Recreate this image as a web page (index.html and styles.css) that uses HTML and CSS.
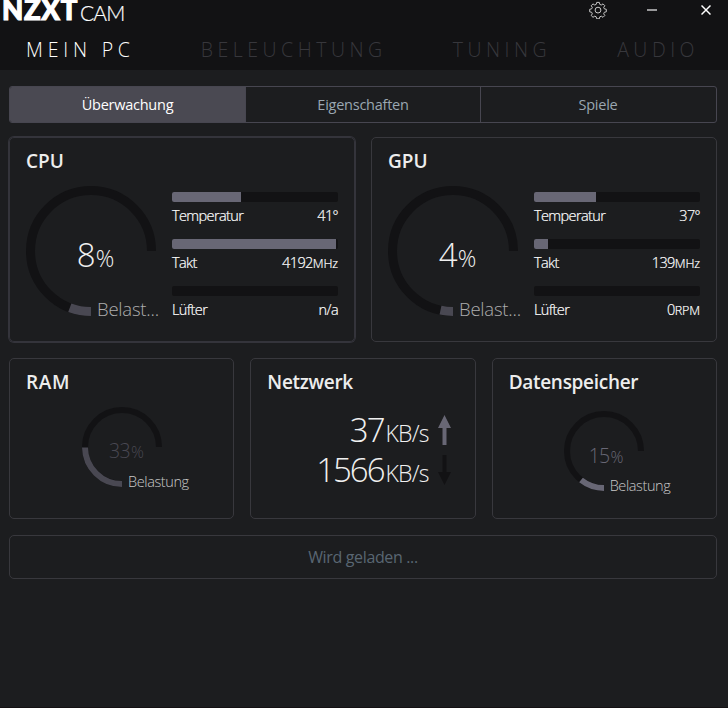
FILE: index.html
```html
<!DOCTYPE html>
<html lang="de">
<head>
<meta charset="utf-8">
<title>NZXT CAM</title>
<link rel="stylesheet" href="styles.css">
</head>
<body>
<div class="app">
  <header class="header">
    <div class="titlebar">
      <div class="logo"><b>NZXT</b><span>CAM</span></div>
      <div class="controls">
        <svg class="gear" width="18" height="18" viewBox="-9 -9 18 18"><path d="M-1.3-7.6h2.6l.5 2 1.5.6 1.7-1.1 1.8 1.8-1.1 1.7.6 1.4 2 .5v2.5l-2 .5-.6 1.5 1.1 1.7-1.8 1.8-1.7-1.1-1.5.6-.5 2h-2.6l-.5-2-1.5-.6-1.7 1.1-1.8-1.8 1.1-1.7-.6-1.5-2-.5v-2.5l2-.5.6-1.4-1.1-1.7 1.8-1.8 1.7 1.1 1.5-.6z"/><circle cy=".1" r="2.9"/></svg>
        <svg class="minimize" width="10" height="18" viewBox="0 0 10 18"><path d="M0 8h10v2H0z"/></svg>
        <svg class="close" width="10" height="18" viewBox="0 0 10 18"><path d="M.5 5.5l9 9M9.5 5.5l-9 9"/></svg>
      </div>
    </div>
    <nav class="nav">
      <a class="active">MEIN PC</a><a>BELEUCHTUNG</a><a>TUNING</a><a>AUDIO</a>
    </nav>
  </header>
  <main class="main">
    <div class="tabs"><a class="tab selected">Überwachung</a><a class="tab">Eigenschaften</a><a class="tab">Spiele</a></div>
    <div class="row two">
      <section class="card focused">
        <h2>CPU</h2>
        <div class="processor">
          <div class="gauge large">
            <svg width="130" height="130" viewBox="-65 -65 130 130"><path class="track" d="M0 60.5A60.5 60.5 0 1 1 60.5 0"/><path class="value dim" d="M0 60.5A60.5 60.5 0 0 1 -21.2 56.7"/></svg>
            <div class="percent">8<small>%</small></div>
            <div class="caption">Belast...</div>
          </div>
          <div class="meters">
            <div class="meter"><div class="bar"><i style="width:41.3%"></i></div><p><span>Temperatur</span><span>41<sup>°</sup></span></p></div>
            <div class="meter"><div class="bar"><i style="width:98.5%"></i></div><p><span>Takt</span><span>4192<small>MHz</small></span></p></div>
            <div class="meter"><div class="bar"></div><p><span>Lüfter</span><span>n/a</span></p></div>
          </div>
        </div>
      </section>
      <section class="card">
        <h2>GPU</h2>
        <div class="processor">
          <div class="gauge large">
            <svg width="130" height="130" viewBox="-65 -65 130 130"><path class="track" d="M0 60.5A60.5 60.5 0 1 1 60.5 0"/><path class="value dim" d="M0 60.5A60.5 60.5 0 0 1 -12.5 59.2"/></svg>
            <div class="percent">4<small>%</small></div>
            <div class="caption">Belast...</div>
          </div>
          <div class="meters">
            <div class="meter"><div class="bar"><i style="width:37.3%"></i></div><p><span>Temperatur</span><span>37<sup>°</sup></span></p></div>
            <div class="meter"><div class="bar"><i style="width:8.4%"></i></div><p><span>Takt</span><span>139<small>MHz</small></span></p></div>
            <div class="meter"><div class="bar"></div><p><span>Lüfter</span><span>0<small>RPM</small></span></p></div>
          </div>
        </div>
      </section>
    </div>
    <div class="row three">
      <section class="card">
        <h2 class="ram-title">RAM</h2>
        <div class="gauge small ram">
          <svg width="80" height="80" viewBox="-40 -40 80 80"><path class="track" d="M0 37A37 37 0 1 1 37 0"/><path class="value dim" d="M0 37A37 37 0 0 1 -37 .5"/></svg>
          <div class="percent">33<small>%</small></div>
          <div class="caption">Belastung</div>
        </div>
      </section>
      <section class="card">
        <h2>Netzwerk</h2>
        <div class="network">
          <div class="rate"><span>37</span><small>KB/s</small><svg class="up" width="13" height="30" viewBox="0 0 13 30"><path d="M6.5 0L13 13H8.5V30h-4V13H0z"/></svg></div>
          <div class="rate"><span>1566</span><small>KB/s</small><svg class="down" width="13" height="30" viewBox="0 0 13 30"><path d="M6.5 30L13 17H8.5V0h-4v17H0z"/></svg></div>
        </div>
      </section>
      <section class="card">
        <h2>Datenspeicher</h2>
        <div class="gauge small storage">
          <svg width="80" height="80" viewBox="-40 -40 80 80"><path class="track" d="M0 37A37 37 0 1 1 37 0"/><path class="value" d="M0 37A37 37 0 0 1 -23 29"/></svg>
          <div class="percent">15<small>%</small></div>
          <div class="caption">Belastung</div>
        </div>
      </section>
    </div>
    <div class="card loading">Wird geladen ...</div>
  </main>
</div>
</body>
</html>
```
FILE: styles.css
```css
* { box-sizing: border-box; }
body {
  margin: 0;
  background: #1c1d1f;
  color: #f0f0f0;
  font-family: "Open Sans", "Noto Sans", sans-serif;
  font-weight: 300;
}
.app { width: 728px; height: 708px; overflow: hidden; border-bottom: 1px solid #141113; }
.header { height: 70px; background: #121214; }
.titlebar { display: flex; justify-content: space-between; height: 24px; }
.logo { display: flex; height: 24px; margin-left: 2px; color: #fff; white-space: nowrap; }
.logo b { font: 900 27.5px/20px Lato, sans-serif; letter-spacing: .7px; -webkit-text-stroke: 1.1px #fff; }
.logo span { font: 300 21px/25px Lato, sans-serif; letter-spacing: -.9px; margin-left: 2px; -webkit-text-stroke: .2px #fff; }
.controls { display: flex; padding: 1px 17px 0 0; }
.gear { fill: none; stroke: #c8c8c8; stroke-width: 1; }
.minimize { fill: #98989a; margin-left: 40px; }
.close { fill: none; stroke: #fff; stroke-width: 1.5; margin-left: 44px; margin-top: -1px; }
.nav {
  display: flex;
  justify-content: space-between;
  padding: 0 29px 0 26px;
  font-size: 19.5px;
  line-height: 51px;
  letter-spacing: 4.5px;
  color: #37373c;
  white-space: nowrap;
}
.nav .active { color: #fff; letter-spacing: 4.8px; }
.main { padding: 15px 11px 0 9px; margin-top: 1px; }
.tabs { display: grid; grid-template-columns: 236px 235px 235px; height: 37px; border: 1px solid #474650; border-radius: 3px; overflow: hidden; }
.tab { border-left: 1px solid #474650; font-size: 14.5px; font-weight: 400; letter-spacing: -.25px; text-align: center; line-height: 36px; color: #9aa7b1; padding-right: 1px; margin-left: -1px; }
.tab.selected { background: #4a4952; color: #fff; }
.row { display: grid; gap: 16px; }
.two { grid-template-columns: 1fr 1fr; margin: 14px 0 16px; }
.three { grid-template-columns: repeat(3, 1fr); margin-bottom: 16px; }
.card { border: 1px solid #38383d; border-radius: 5px; }
.two .card { height: 205px; padding: 10px 16px; }
.three .card { height: 161px; padding: 10px 16px; }
.focused { border-color: #34343b; box-shadow: 0 0 0 1px #34343b; }
h2 { margin: 0; font-size: 19px; line-height: 26px; font-weight: 600; letter-spacing: -.3px; color: #ededed; }
.two h2 { letter-spacing: 0; }
.ram-title { letter-spacing: .6px; }
.processor { display: flex; gap: 16px; margin-top: 12px; }
.gauge { position: relative; }
.gauge svg { display: block; fill: none; }
.track { stroke: #121214; }
.value { stroke: #686775; }
.value.dim { stroke: #494852; }
.large { width: 130px; height: 130px; stroke-width: 9; }
.small { width: 80px; height: 80px; stroke-width: 6; }
.percent, .caption { position: absolute; white-space: nowrap; }
.large .percent { left: 9px; right: 0; top: 46px; text-align: center; font-size: 33px; line-height: 46px; letter-spacing: 0; }
.large .percent small { font-size: 23px; }
.large .caption { left: 71px; top: 110px; font-size: 18.5px; line-height: 26px; letter-spacing: -.2px; color: #adadae; }
.meters { width: 166px; padding-top: 6px; }
.meter { height: 47px; }
.bar { height: 10px; background: #121214; border-radius: 2px; overflow: hidden; }
.bar i { display: block; height: 100%; background: #686775; }
.meter p { display: flex; justify-content: space-between; margin: 0; padding-top: 3px; font-size: 14.5px; line-height: 21px; letter-spacing: -.6px; color: #fff; -webkit-text-stroke: .2px #fff; }
.meter small { font-size: 12.5px; letter-spacing: -.1px; }
.meter sup { font-size: 14px; line-height: 1; vertical-align: 0; }
.ram { margin: 12px 0 0 56px; }
.storage { margin: 16px 0 0 55px; }
.small .percent { left: 27px; top: 30px; font-size: 19.5px; line-height: 28px; letter-spacing: -.7px; color: #494852; }
.storage .percent { left: 25px; top: 31px; color: #686775; }
.small .percent small { font-size: 16px; margin-left: 1px; }
.small .caption { left: 46px; top: 64px; font-size: 14.5px; line-height: 21px; letter-spacing: -.4px; color: #c8c8c8; }
.network { margin: 15px 8px 0 0; }
.rate { display: flex; justify-content: flex-end; align-items: baseline; font-size: 33px; line-height: 40px; height: 40px; letter-spacing: -2px; white-space: nowrap; }
.rate small { font-size: 23px; line-height: 28px; letter-spacing: -.8px; margin-left: 2px; }
.rate svg { align-self: flex-start; margin: 5px 0 0 9px; }
.up { fill: #686775; }
.down { fill: #121214; }
.loading { height: 44px; text-align: center; font-size: 16px; font-weight: 400; line-height: 42px; letter-spacing: -.35px; color: #596672; }
```
